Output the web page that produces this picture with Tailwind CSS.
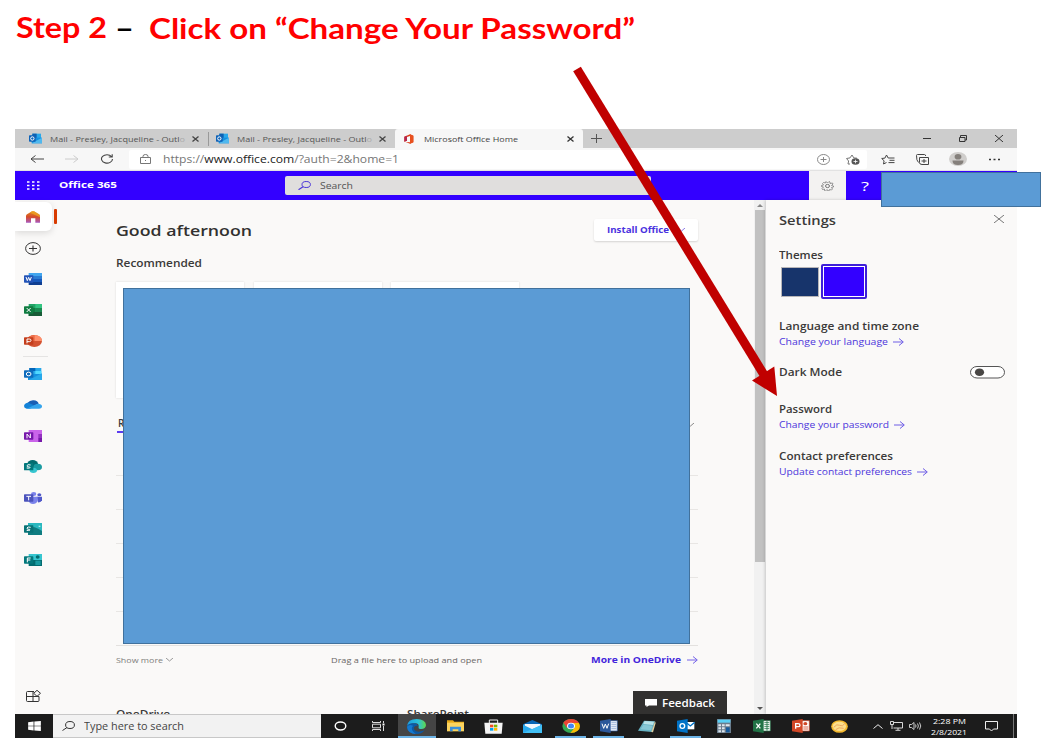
<!DOCTYPE html>
<html lang="en">
<head>
<meta charset="utf-8">
<title>Step 2 – Change Your Password</title>
<script src="https://cdn.jsdelivr.net/npm/@tailwindcss/browser@4"></script>
</head>
<body class="relative h-[747px] w-[1057px] overflow-hidden bg-white font-['Open_Sans','Noto_Sans',sans-serif] text-[#3b3a39]">

<h1 class="flex h-[129px] items-start pl-4 font-['Lato',sans-serif] text-[29px] leading-[36px] font-bold text-[#ff0000]">
  <span data-w="91" class="mt-[9px] inline-block shrink-0 origin-left whitespace-nowrap">Step 2</span>
  <span data-w="19" class="mt-[9px] ml-2 inline-block shrink-0 origin-left text-black">–</span>
  <span class="mt-[10px] ml-[15px] block h-[34px] overflow-hidden"><span data-w="486" class="inline-block origin-left whitespace-nowrap">Click on “Change Your Password”</span></span>
</h1>

<main class="ml-[15px] flex h-[609px] w-[1002px] flex-col overflow-hidden bg-[#faf9f8]">

  <!-- Tab strip -->
  <div class="flex h-[19px] shrink-0 items-center bg-[#cdcdcd] text-[8px] leading-[12px] text-[#555]">
    <svg class="ml-[14px] h-[11px] w-[13px] shrink-0" viewBox="0 0 39 33"><path d="M10 2h26v14H10z" fill="#28a8ea"/><path d="M10 2h13v14H10z" fill="#0f5fb0"/><path d="M8 14h31v17H8z" fill="#1490df"/><path d="M8 31L39 14v17z" fill="#50b8ee"/><rect y="7" width="20" height="19" rx="2" fill="#0f63b8"/><ellipse cx="10" cy="16.500" rx="5" ry="5" fill="none" stroke="#fff" stroke-width="3"/></svg>
    <span class="ml-2 flex w-[137px] shrink-0"><span data-w="135" class="inline-block shrink-0 origin-left whitespace-nowrap">Mail - Presley, Jacqueline - Outl<span class="text-[#aaa]">o</span></span></span>
    <svg class="ml-[5px] h-[6px] w-[7px] shrink-0" viewBox="0 0 7 6"><path d="M.5.5l6 5m0-5l-6 5" stroke="#444" stroke-width="1.300"/></svg>
    <i class="ml-[9px] h-[14px] w-px bg-[#999]"></i>
    <svg class="ml-[7px] h-[11px] w-[13px] shrink-0" viewBox="0 0 39 33"><path d="M10 2h26v14H10z" fill="#28a8ea"/><path d="M10 2h13v14H10z" fill="#0f5fb0"/><path d="M8 14h31v17H8z" fill="#1490df"/><path d="M8 31L39 14v17z" fill="#50b8ee"/><rect y="7" width="20" height="19" rx="2" fill="#0f63b8"/><ellipse cx="10" cy="16.500" rx="5" ry="5" fill="none" stroke="#fff" stroke-width="3"/></svg>
    <span class="ml-2 flex w-[137px] shrink-0"><span data-w="135" class="inline-block shrink-0 origin-left whitespace-nowrap">Mail - Presley, Jacqueline - Outl<span class="text-[#aaa]">o</span></span></span>
    <svg class="ml-[5px] h-[6px] w-[7px] shrink-0" viewBox="0 0 7 6"><path d="M.5.5l6 5m0-5l-6 5" stroke="#444" stroke-width="1.300"/></svg>
    <div class="ml-[9px] flex h-full w-[188px] shrink-0 items-center rounded-t-[3px] bg-[#f7f7f7] text-[#444]">
      <svg class="ml-[9px] h-[10px] w-[10px]" viewBox="0 0 30 30"><path d="M1 8L18 1l10 4v20l-10 4L5 24l13 1V6L9 9v11l-8 3z" fill="#dc3e15"/><path d="M18 1l10 4v20l-10 4z" fill="#e8501e"/><path d="M1 8l8-3v15l-8 3z" fill="#b5264c"/></svg>
      <span data-w="94" class="ml-[10px] inline-block shrink-0 origin-left whitespace-nowrap">Microsoft Office Home</span>
      <svg class="ml-[49px] h-[6px] w-[7px] shrink-0" viewBox="0 0 7 6"><path d="M.5.5l6 5m0-5l-6 5" stroke="#333" stroke-width="1.300"/></svg>
    </div>
    <svg class="ml-[8px] h-[9px] w-[11px]" viewBox="0 0 11 9"><path d="M0 4.500h11M5.500 0v9" stroke="#555"/></svg>
    <svg class="ml-[321px] h-[9px] w-[8px]" viewBox="0 0 8 9"><path d="M0 4.500h8" stroke="#333"/></svg>
    <svg class="ml-[28px] h-[7px] w-[8px]" viewBox="0 0 8 7"><path d="M.5 2.500h5.500v4H.5zM1.500 2.500V.5h6v4.500H6" fill="none" stroke="#333"/></svg>
    <svg class="ml-[28px] h-[7px] w-[8px]" viewBox="0 0 8 7"><path d="M0 0l8 7m0-7L0 7" stroke="#333"/></svg>
  </div>

  <!-- Address bar -->
  <div class="flex h-[23px] shrink-0 items-center border-b border-[#e2e2e2] bg-[#f7f7f7]">
    <svg class="ml-[15px] h-[8px] w-[14px]" viewBox="0 0 14 8"><path d="M14 4H1M5.500.5L1 4l4.500 3.500" fill="none" stroke="#444"/></svg>
    <svg class="ml-[21px] h-[8px] w-[14px]" viewBox="0 0 14 8"><path d="M0 4h13M8.500.5L13 4 8.500 7.500" fill="none" stroke="#ccc"/></svg>
    <svg class="ml-[21px] h-[10px] w-[14px]" viewBox="0 0 14 10"><path d="M11.500 2.500A5.500 4.200 0 1 0 12.500 5M12.200.3v2.700H8.800" fill="none" stroke="#444" stroke-width="1.100"/></svg>
    <div class="ml-[15px] flex h-[19px] w-[738px] items-center rounded-[2px] bg-white">
      <svg class="ml-[11px] h-[10px] w-[11px]" viewBox="0 0 11 10"><path d="M.5 3.500h10v6H.5zM3 3.500V2.300Q3 .5 5.500.5T8 2.300v1.200" fill="none" stroke="#777"/><path d="M5 6h1v1H5z" fill="#777"/></svg>
      <span data-w="236" class="ml-[12px] inline-block shrink-0 origin-left text-[10.500px] leading-[16px] whitespace-nowrap text-[#767676]">https://<span class="text-[#222]">www.office.com</span>/?auth=2&amp;home=1</span>
      <svg class="ml-[418px] h-[11px] w-[13px]" viewBox="0 0 13 11"><ellipse cx="6.500" cy="5.500" rx="6" ry="5" fill="none" stroke="#888"/><path d="M3.500 5.500h6M6.500 3v5" stroke="#888"/></svg>
      <svg class="ml-[16px] h-[11px] w-[14px]" viewBox="0 0 14 11"><path d="M4 10l-2 0 .6-3L.5 4.500l3.500-.6L6 1l1.800 2.900L11 4.200" fill="none" stroke="#777"/><ellipse cx="9.500" cy="7.500" rx="4" ry="3.200" fill="#555"/><path d="M7.500 7.500h4M9.500 5.700v3.600" stroke="#fff" stroke-width=".8"/></svg>
    </div>
    <svg class="ml-[14px] h-[11px] w-[14px]" viewBox="0 0 14 11"><path d="M5.500 8.500L2.500 10l.6-3.200L.7 4.500l3.200-.4L5.500 1l1.700 3h6.300M8.500 6.300h5M7.500 8.600h6" fill="none" stroke="#444"/></svg>
    <svg class="ml-[21px] h-[11px] w-[13px]" viewBox="0 0 13 11"><path d="M3.500 3.500h9v7H6q-2.500 0-2.500-2zM2.500 8.500Q.3 6.500.5 1.500q0-1 1-1h7q1 0 1.200 1.500M5.500 7h5M8 5v4" fill="none" stroke="#444"/></svg>
    <svg class="ml-[20px] h-[14px] w-[18px]" viewBox="0 0 18 14"><ellipse cx="9" cy="7" rx="9" ry="7" fill="#d0cecc"/><ellipse cx="9" cy="4.800" rx="3.400" ry="2.800" fill="#85807c"/><path d="M3.500 8.500h11q0 4.500-5.500 4.500T3.500 8.500z" fill="#85807c"/></svg>
    <svg class="ml-[22px] h-[3px] w-[11px]" viewBox="0 0 11 3"><path d="M0 1.500h2M4.500 1.500h2M9 1.500h2" stroke="#333" stroke-width="1.500"/></svg>
  </div>

  <!-- Office header -->
  <div class="flex h-[29px] shrink-0 items-center bg-[#3300ff] text-white">
    <svg class="ml-[12px] h-[9px] w-[13px]" viewBox="0 0 13 9"><path d="M0 1h2.500M5 1h2.500M10 1h2.500M0 4.500h2.500M5 4.500h2.500M10 4.500h2.500M0 8h2.500M5 8h2.500M10 8h2.500" stroke="#fff" stroke-width="1.700"/></svg>
    <span data-w="58" class="ml-[19px] inline-block shrink-0 origin-left text-[9.500px] font-bold whitespace-nowrap">Office 365</span>
    <div class="ml-[168px] flex h-[19px] w-[366px] shrink-0 items-center rounded-[2px] bg-[#e0dedd] text-[#555]">
      <svg class="ml-[13px] h-[9px] w-[13px]" viewBox="0 0 13 9"><ellipse cx="8.200" cy="3.500" rx="4.200" ry="3" fill="none" stroke="#4a35d8"/><path d="M5 5.700L.5 8.700" stroke="#4a35d8" stroke-width="1.200"/></svg>
      <span data-w="33" class="ml-[9px] inline-block shrink-0 origin-left text-[9px]">Search</span>
    </div>
    <div class="ml-[158px] flex h-full w-[37px] shrink-0 items-center justify-center bg-[#f3f2f1]">
      <svg class="h-[10px] w-[13px]" viewBox="0 0 26 20"><path d="M10 1l3 3 3-3 2 1 0 3 5-1 1 2-3 3 4 1v2l-4 1 2 3-2 2-4-1-1 3h-2l-2-3-3 3-2-1 0-3-4 1-1-2 3-3-4-1V9l4-1-2-3 2-2 4 1z" fill="none" stroke="#777" stroke-width="1.500"/><ellipse cx="13" cy="10" rx="4" ry="3.200" fill="none" stroke="#777" stroke-width="2"/></svg>
    </div>
    <span data-w="8" class="ml-[15px] inline-block shrink-0 origin-left text-[13px] leading-[18px]">?</span>
  </div>

  <div class="flex min-h-0 flex-1">
    <!-- App rail -->
    <nav class="flex w-[60px] shrink-0 flex-col">
      <div class="mt-[2px] flex h-[31px] items-start">
        <div class="flex h-[29px] w-[37px] items-center rounded-r-[6px] bg-white pl-[11px] shadow-[0_2px_7px_rgba(0,0,0,.13)]">
          <svg class="h-[12px] w-[14px]" viewBox="0 0 42 36"><defs><linearGradient id="hm" x2="0" y2="1"><stop stop-color="#e08a20"/><stop offset=".5" stop-color="#d54a28"/><stop offset="1" stop-color="#a85ac0"/></linearGradient></defs><path d="M0 15Q0 12 3 10L18 1q3-1 6 0l15 9q3 2 3 5v20H28V22H15v13H0z" fill="url(#hm)"/><path d="M12 5L18 1q3-1 6 0l15 9q3 2 3 5v4z" fill="#f0a81c" opacity=".7"/></svg>
        </div>
        <i class="mt-[7px] ml-[2px] h-[15px] w-[3px] rounded-[1px] bg-[#d83b01]"></i>
      </div>
      <div class="flex h-[31px] items-center pl-[10px]"><svg class="h-[13px] w-[16px]" viewBox="0 0 16 13"><ellipse cx="8" cy="6.500" rx="7.400" ry="5.900" fill="none" stroke="#333"/><path d="M4 6.500h8M8 3.500v6" stroke="#333" stroke-width="1.100"/></svg></div>
      <div class="flex h-[30px] items-center pl-[9px]"><svg class="h-[12px] w-[18px]" viewBox="0 0 54 36"><path d="M14 0h40v9H14z" fill="#41a5ee"/><path d="M14 9h40v9H14z" fill="#2b7cd3"/><path d="M14 18h40v9H14z" fill="#185abd"/><path d="M14 27h40v9H14z" fill="#103f91"/><rect y="7" width="28" height="22" rx="2" fill="#2455b8"/><path d="M6 12l4 11 4-10 4 10 4-11" fill="none" stroke="#fff" stroke-width="3"/></svg></div>
      <div class="flex h-[31px] items-center pl-[9px]"><svg class="h-[12px] w-[18px]" viewBox="0 0 54 36"><path d="M14 0h40v36H14z" fill="#21a366"/><path d="M34 0h20v12H34z" fill="#33c481"/><path d="M14 12h20v12H14z" fill="#107c41"/><path d="M14 24h40v12H14z" fill="#185c37"/><path d="M34 12h20v12H34z" fill="#1a8a50"/><rect y="7" width="28" height="22" rx="2" fill="#107c41"/><path d="M8 12l12 12M20 12L8 24" stroke="#fff" stroke-width="3"/></svg></div>
      <div class="flex h-[31px] items-center pl-[9px]"><svg class="h-[12px] w-[18px]" viewBox="0 0 54 36"><ellipse cx="31" cy="18" rx="23" ry="18" fill="#d35230"/><path d="M31 0q23 1 23 18H31z" fill="#ff8f6b"/><path d="M31 0Q10 1 8 18h23z" fill="#ed6c47"/><rect y="7" width="28" height="22" rx="2" fill="#c43e1c"/><path d="M9 25V12h7q5 0 5 4t-5 4H9" fill="none" stroke="#fff" stroke-width="3"/></svg></div>
      <i class="ml-[8px] h-px w-[25px] bg-[#e5e4e3]"></i>
      <div class="mt-[1px] flex h-[31px] items-center pl-[9px]"><svg class="h-[12px] w-[18px]" viewBox="0 0 54 36"><path d="M16 0h36v18H16z" fill="#28a8ea"/><path d="M16 0h18v9H16z" fill="#0364b8"/><path d="M34 9h18v10H34z" fill="#50d9ff"/><path d="M12 18h42v18H12z" fill="#1490df"/><path d="M14 36l40-20v20z" fill="#28a8ea"/><rect y="7" width="28" height="22" rx="2" fill="#0f6cbd"/><ellipse cx="14" cy="18" rx="7" ry="5.500" fill="none" stroke="#fff" stroke-width="3"/></svg></div>
      <div class="flex h-[31px] items-center pl-[9px]"><svg class="h-[9px] w-[18px]" viewBox="0 0 54 27"><path d="M10 9Q18 0 29 1q12 1 15 10L24 20z" fill="#1a5fb4"/><path d="M8 26Q0 25 0 18q1-9 13-10l22 10-17 8z" fill="#1483d8"/><path d="M8 26L40 11q14 0 14 8 0 7-9 7z" fill="#35a4ec"/></svg></div>
      <div class="flex h-[31px] items-center pl-[9px]"><svg class="h-[12px] w-[18px]" viewBox="0 0 54 36"><path d="M14 0h40v36H14z" fill="#ca64ea"/><path d="M43 12h11v12H43z" fill="#9332bf"/><path d="M43 24h11v12H43z" fill="#7719aa"/><rect y="7" width="28" height="22" rx="2" fill="#7719aa"/><path d="M9 25V12l10 12V11" fill="none" stroke="#fff" stroke-width="3"/></svg></div>
      <div class="flex h-[31px] items-center pl-[9px]"><svg class="h-[13px] w-[18px]" viewBox="0 0 54 39"><ellipse cx="26" cy="12" rx="16" ry="12" fill="#036c70"/><ellipse cx="41" cy="21" rx="13" ry="10" fill="#1a9ba1"/><ellipse cx="28" cy="31" rx="11" ry="8" fill="#37c6d0"/><rect y="9" width="28" height="22" rx="2" fill="#03787c"/><path d="M20 15q-10-3-11 2t8 4q4 5-9 3" fill="none" stroke="#fff" stroke-width="3"/></svg></div>
      <div class="flex h-[31px] items-center pl-[9px]"><svg class="h-[12px] w-[18px]" viewBox="0 0 54 36"><ellipse cx="29" cy="6" rx="8" ry="6" fill="#7b83eb"/><ellipse cx="46" cy="8" rx="6" ry="4.500" fill="#5059c9"/><path d="M38 14h16v11q-3 7-12 6z" fill="#5059c9"/><path d="M14 14h27v13q-4 9-14 9T14 27z" fill="#7b83eb"/><rect y="7" width="28" height="22" rx="2" fill="#4b53bc"/><path d="M7 13h14M14 13v12" stroke="#fff" stroke-width="3"/></svg></div>
      <div class="flex h-[31px] items-center pl-[9px]"><svg class="h-[12px] w-[18px]" viewBox="0 0 54 36"><path d="M12 0h42v36H12z" fill="#2ab8bf"/><path d="M12 16q10-6 20-3t22 11v12H12z" fill="#0f7c80"/><path d="M44 8h5v4h-5z" fill="#b0f0f0"/><rect y="7" width="28" height="22" rx="2" fill="#087377"/><path d="M20 13q-10-3-11 2t8 4q4 5-9 3" fill="none" stroke="#fff" stroke-width="3"/></svg></div>
      <div class="flex h-[31px] items-center pl-[9px]"><svg class="h-[12px] w-[18px]" viewBox="0 0 54 36"><path d="M14 0h40v18H14z" fill="#37c6d0"/><path d="M14 18h40v18H14z" fill="#036c70"/><ellipse cx="41" cy="9" rx="6" ry="5" fill="#036c70"/><path d="M34 20h16v13H34z" fill="#1a9ba1"/><rect y="7" width="28" height="22" rx="2" fill="#03787c"/><path d="M10 25V12h10M10 18h9" fill="none" stroke="#fff" stroke-width="3"/></svg></div>
      <svg class="mt-auto mb-[12px] ml-[11px] h-[12px] w-[15px]" viewBox="0 0 15 12"><path d="M8 1.500H1.500q-1 0-1 1V10.500q0 1 1 1h10.500q1 0 1-1V6.500H.5M7 1.500v10" fill="none" stroke="#333"/><path d="M11 .3l3.500 3L11 6.300l-3.300-3z" fill="#faf9f8" stroke="#333"/></svg>
    </nav>

    <!-- Home content -->
    <section class="flex w-[679px] shrink-0 flex-col overflow-hidden pl-[41px]">
      <div class="mt-[19px] flex h-[22px] w-[582px] items-center justify-between">
        <span data-w="136" class="inline-block shrink-0 origin-left text-[14px] font-semibold whitespace-nowrap text-[#323130]">Good afternoon</span>
        <div class="flex h-[22px] w-[104px] shrink-0 items-center rounded-[2px] bg-white pl-[13px] text-[#4a32e0] shadow-[0_1px_2px_rgba(0,0,0,.15)]">
          <span data-w="62" class="inline-block shrink-0 origin-left text-[9px] font-bold whitespace-nowrap">Install Office</span>
          <svg class="ml-[9px] h-[4px] w-[7px]" viewBox="0 0 7 4"><path d="M0 0l3.500 3L7 0" fill="none" stroke="#8a7ae8"/></svg>
        </div>
      </div>
      <span data-w="86" class="mt-[14px] inline-block origin-left self-start text-[10px] leading-[16px] font-semibold">Recommended</span>
      <div class="mt-[11px] flex gap-[9.500px]">
        <div class="h-[116px] w-[128px] bg-white shadow-[0_0_2px_rgba(0,0,0,.13)]"></div>
        <div class="h-[116px] w-[128px] bg-white shadow-[0_0_2px_rgba(0,0,0,.13)]"></div>
        <div class="h-[116px] w-[128px] bg-white shadow-[0_0_2px_rgba(0,0,0,.13)]"></div>
      </div>
      <div class="mt-[18px] flex h-[17px] w-[578px] items-center justify-between pl-[1px]">
        <span class="h-[17px] w-[44px] border-b-2 border-[#5b3df0] pl-[1px] text-[10px] leading-[15px] font-semibold">Recent</span>
        <svg class="h-[4px] w-[7px]" viewBox="0 0 7 4"><path d="M0 0l3.500 3L7 0" fill="none" stroke="#888"/></svg>
      </div>
      <div class="mt-[42px] flex w-[582px] flex-col gap-[33px]">
        <i class="h-px bg-[#e8e6e4]"></i><i class="h-px bg-[#e8e6e4]"></i><i class="h-px bg-[#e8e6e4]"></i><i class="h-px bg-[#e8e6e4]"></i><i class="h-px bg-[#e8e6e4]"></i><i class="h-px bg-[#e3e1df]"></i>
      </div>
      <div class="mt-[8px] flex h-[12px] w-[582px] items-center text-[8px] text-[#6a6866]">
        <span data-w="47" class="inline-block shrink-0 origin-left whitespace-nowrap text-[#807e7c]">Show more</span>
        <svg class="ml-[3px] h-[4px] w-[7px] shrink-0" viewBox="0 0 7 4"><path d="M0 0l3.500 3L7 0" fill="none" stroke="#999"/></svg>
        <span data-w="151" class="ml-[158px] inline-block shrink-0 origin-left whitespace-nowrap">Drag a file here to upload and open</span>
        <span data-w="90" class="ml-[109px] inline-block shrink-0 origin-left text-[9px] font-bold whitespace-nowrap text-[#4326dc]">More in OneDrive</span>
        <svg class="ml-[6px] h-[8px] w-[11px] shrink-0" viewBox="0 0 11 8"><path d="M0 4h10M6 .5L10.300 4 6 7.500" fill="none" stroke="#7563e8"/></svg>
      </div>
      <div class="mt-[25px] flex w-[611px] items-start">
        <div class="mt-[15px] flex h-[14px] w-[517px] shrink-0 text-[11px] leading-[16px] font-semibold">
          <span data-w="54" class="inline-block shrink-0 origin-left">OneDrive</span>
          <span data-w="62" class="ml-[237px] inline-block shrink-0 origin-left">SharePoint</span>
        </div>
        <div class="flex h-[24px] w-[94px] shrink-0 items-center bg-[#323130] pl-[12px] text-white">
          <svg class="h-[8px] w-[12px] shrink-0" viewBox="0 0 12 8"><path d="M0 0h12v6.500H4L1.500 8V6.500H0z" fill="#fff"/></svg>
          <span data-w="53" class="ml-[5px] inline-block shrink-0 origin-left text-[11px] font-semibold">Feedback</span>
        </div>
      </div>
    </section>

    <!-- Scrollbar -->
    <div class="flex w-[12px] shrink-0 flex-col items-center bg-[#f1f1f1]">
      <svg class="mt-[4px] h-[3px] w-[6px]" viewBox="0 0 6 3"><path d="M0 3l3-3 3 3z" fill="#888"/></svg>
      <i class="mt-[3px] h-[352px] w-[10px] bg-[#c1c1c1]"></i>
      <svg class="mt-auto mb-[4px] h-[3px] w-[6px]" viewBox="0 0 6 3"><path d="M0 0h6L3 3z" fill="#555"/></svg>
    </div>

    <!-- Settings panel -->
    <aside class="flex w-[251px] shrink-0 flex-col items-start bg-[#faf9f8] pl-[13px] text-[10px] leading-[14px] font-semibold shadow-[-1px_0_3px_rgba(0,0,0,.18)]">
      <div class="mt-[12px] flex h-[18px] w-[225px] items-center justify-between">
        <span data-w="57" class="inline-block shrink-0 origin-left text-[12.500px] leading-[18px]">Settings</span>
        <svg class="mb-[5px] h-[8px] w-[10px]" viewBox="0 0 10 8"><path d="M0 0l10 8m0-8L0 8" stroke="#666" stroke-width=".9"/></svg>
      </div>
      <span data-w="44" class="mt-[18px] inline-block origin-left">Themes</span>
      <div class="mt-[2px] ml-[2px] flex items-center">
        <i class="h-[30px] w-[38px] border border-[#b8b6b8] bg-[#17346b]"></i>
        <i class="ml-[2px] h-[35px] w-[46px] rounded-[2px] border-2 border-[#3d1ed8] bg-white p-px"><b class="block h-full bg-[#3300ff]"></b></i>
      </div>
      <span data-w="140" class="mt-[20px] inline-block origin-left whitespace-nowrap">Language and time zone</span>
      <div class="mt-[2px] flex items-center text-[8.500px] font-normal text-[#4d37dc]"><span data-w="109" class="inline-block shrink-0 origin-left whitespace-nowrap">Change your language</span><svg class="ml-[5px] h-[8px] w-[11px]" viewBox="0 0 11 8"><path d="M0 4h10M6 .5L10.300 4 6 7.500" fill="none" stroke="#6f5ee6"/></svg></div>
      <div class="mt-[16px] flex w-[226px] items-center justify-between">
        <span data-w="63" class="inline-block shrink-0 origin-left whitespace-nowrap">Dark Mode</span>
        <svg class="h-[13px] w-[35px]" viewBox="0 0 35 13"><rect x=".5" y=".5" width="34" height="11.500" rx="6.500" ry="5.700" fill="#fff" stroke="#555"/><ellipse cx="9.500" cy="6.200" rx="4.600" ry="3.800" fill="#484644"/></svg>
      </div>
      <span data-w="53" class="mt-[23px] inline-block origin-left">Password</span>
      <div class="mt-[2px] flex items-center text-[8.500px] font-normal text-[#4d37dc]"><span data-w="110" class="inline-block shrink-0 origin-left whitespace-nowrap">Change your password</span><svg class="ml-[5px] h-[8px] w-[11px]" viewBox="0 0 11 8"><path d="M0 4h10M6 .5L10.300 4 6 7.500" fill="none" stroke="#6f5ee6"/></svg></div>
      <span data-w="114" class="mt-[17px] inline-block origin-left whitespace-nowrap">Contact preferences</span>
      <div class="mt-[2px] flex items-center text-[8.500px] font-normal text-[#4d37dc]"><span data-w="133" class="inline-block shrink-0 origin-left whitespace-nowrap">Update contact preferences</span><svg class="ml-[5px] h-[8px] w-[11px]" viewBox="0 0 11 8"><path d="M0 4h10M6 .5L10.300 4 6 7.500" fill="none" stroke="#6f5ee6"/></svg></div>
    </aside>
  </div>

  <!-- Taskbar -->
  <footer class="z-10 flex h-[24px] shrink-0 bg-[#1c1c1c]">
    <div class="flex w-[38px] shrink-0 items-center justify-center"><svg class="h-[10px] w-[13px]" viewBox="0 0 14 11"><path d="M0 1.300L6 .6v4.500H0zM6.800.5L14 0v5.100H6.800zM0 5.900h6v4.500L0 9.700zM6.800 5.900H14V11l-7.200-.6z" fill="#fff"/></svg></div>
    <div class="flex w-[268px] shrink-0 items-center border-y border-[#c8c8c8] bg-[#f2f2f2]">
      <svg class="ml-[9px] h-[10px] w-[13px]" viewBox="0 0 13 10"><ellipse cx="8" cy="4" rx="4.400" ry="3.500" fill="none" stroke="#333"/><path d="M5 6.500L.5 9.500" stroke="#333"/></svg>
      <span data-w="100" class="ml-[9px] inline-block shrink-0 origin-left text-[10px] whitespace-nowrap text-[#444]">Type here to search</span>
    </div>
    <div class="grid grid-cols-[repeat(14,38.4px)]">
      <div class="flex items-center justify-center"><svg class="h-[10px] w-[13px]" viewBox="0 0 13 10"><ellipse cx="6.500" cy="5" rx="5.300" ry="4" fill="none" stroke="#fff" stroke-width="1.400"/></svg></div>
      <div class="flex items-center justify-center"><svg class="h-[10px] w-[13px]" viewBox="0 0 13 10"><path d="M.5 0v1.500h8V0M.5 10V8.500h8V10M.5 3.200h8v3.600h-8zM11.500 0v2M11.500 5v5" fill="none" stroke="#ddd"/><path d="M10.500 2.500h2v2h-2z" fill="#fff"/></svg></div>
      <div class="flex items-center justify-center border-b-2 border-[#6cb3e6] bg-[#454545] pt-[2px]"><svg class="h-[15px] w-[19px]" viewBox="0 0 57 45"><defs><linearGradient id="eg"><stop stop-color="#1b9de2"/><stop offset=".6" stop-color="#2dc2d8"/><stop offset="1" stop-color="#5fd94a"/></linearGradient></defs><path d="M0 22Q2 0 29 0q27 1 28 18-1 12-14 12-10 0-8-6 2-10-10-11Q5 13 0 22z" fill="url(#eg)"/><path d="M0 22q5-10 20-9 10 0 13 7-15 0-12 11 5 10 22 6 6-1 10-4-8 12-24 12Q1 44 0 22z" fill="#0c59a4"/><path d="M18 20q-10 12 9 25Q1 43 0 23q7-8 18-3z" fill="#1479d0"/></svg></div>
      <div class="flex items-center justify-center"><svg class="h-[12px] w-[17px]" viewBox="0 0 51 36"><path d="M0 1h18l4 4h29v10H0z" fill="#e8a917"/><path d="M0 8h51v26H0z" fill="#fcd45f"/><path d="M9 34V20h33v14h-8v-6H17v6z" fill="#3a8fdb"/></svg></div>
      <div class="flex items-center justify-center"><svg class="h-[15px] w-[19px]" viewBox="0 0 57 45"><path d="M16 12V3h25v9" fill="none" stroke="#eee" stroke-width="3"/><path d="M1 11h55l-3 33H4z" fill="#f4f4f4"/><path d="M18 17h10v8H18z" fill="#f05022"/><path d="M30 17h10v8H30z" fill="#7db900"/><path d="M18 27h10v8H18z" fill="#00a3ee"/><path d="M30 27h10v8H30z" fill="#ffb800"/></svg></div>
      <div class="flex items-center justify-center"><svg class="h-[13px] w-[19px]" viewBox="0 0 57 39"><path d="M0 13L28 0l29 13v26H0z" fill="#0a67b5"/><path d="M5 12h47v10L28 31 5 22z" fill="#f3f8fc"/><path d="M0 14l28 14 29-14v25H0z" fill="#29a9ee"/><path d="M0 39l57-25v25z" fill="#42c0f5"/></svg></div>
      <div class="flex items-end justify-center"><div class="flex h-[24px] w-[31px] items-center justify-center border-b-2 border-[#6cb3e6] pt-[2px]"><svg class="h-[14px] w-[18px]" viewBox="0 0 54 42"><ellipse cx="27" cy="21" rx="26" ry="21" fill="#34a853"/><path d="M4 11Q12 0 27 0q17 0 24 12H27l-12 14z" fill="#ea4335"/><path d="M51 12q7 14-4 23-8 7-22 7l13-16-4-14z" fill="#fbbc05"/><ellipse cx="27" cy="21" rx="12" ry="10" fill="#fff"/><ellipse cx="27" cy="21" rx="9" ry="7.500" fill="#4285f4"/></svg></div></div>
      <div class="flex items-end justify-center"><div class="flex h-[24px] w-[31px] items-center justify-center border-b-2 border-[#6cb3e6] pt-[2px]"><svg class="h-[14px] w-[18px]" viewBox="0 0 54 42"><path d="M28 5h24v31H28z" fill="#eef3fb" stroke="#2b579a" stroke-width="2"/><path d="M34 11h15M34 17h15M34 23h15M34 29h15" stroke="#8fa9d3" stroke-width="2.500"/><path d="M0 5l32-5v42L0 37z" fill="#2b579a"/><path d="M6 14l5 14 5-13 5 13 5-14" fill="none" stroke="#fff" stroke-width="3"/></svg></div></div>
      <div class="flex items-center justify-center"><svg class="h-[13px] w-[18px]" viewBox="0 0 54 39"><path d="M18 2l33 2-9 32-42-4z" fill="#68b3c4"/><path d="M20 3l28 2-3 10-29-3z" fill="#b8e2e8"/><path d="M51 4l2 5-8 28-5-1z" fill="#dfcfa0"/><path d="M16 14l27 3-4 14-31-3z" fill="#86c8d6"/></svg></div>
      <div class="flex items-end justify-center"><div class="flex h-[24px] w-[31px] items-center justify-center border-b-2 border-[#6cb3e6] pt-[2px]"><svg class="h-[14px] w-[18px]" viewBox="0 0 54 42"><path d="M28 9h24v22H28z" fill="#fff"/><path d="M30 13l10 8 13-11" fill="none" stroke="#0072c6" stroke-width="4"/><path d="M0 5l32-5v42L0 37z" fill="#0072c6"/><ellipse cx="16" cy="21" rx="7" ry="7" fill="none" stroke="#fff" stroke-width="4"/></svg></div></div>
      <div class="flex items-center justify-center"><svg class="h-[14px] w-[14px]" viewBox="0 0 42 42"><path d="M0 0h42v42H0z" fill="#6b7d8d"/><path d="M2 2h38v9H2z" fill="#59d0f5"/><path d="M4 16h8v6H4zM15 16h8v6h-8zM4 25h8v6H4zM15 25h8v6h-8zM4 34h8v6H4zM15 34h8v6h-8zM26 16h12v6H26z" fill="#dfe7ee"/><path d="M27 25h11v15H27z" fill="#165a9c"/></svg></div>
      <div class="flex items-center justify-center"><svg class="h-[14px] w-[18px]" viewBox="0 0 54 42"><path d="M28 5h24v31H28z" fill="#fff" stroke="#217346" stroke-width="2"/><path d="M34 11h15M34 17h15M34 23h15M34 29h15M42 6v29" stroke="#217346" stroke-width="2.500"/><path d="M0 5l32-5v42L0 37z" fill="#217346"/><path d="M10 14l12 14M22 14L10 28" stroke="#fff" stroke-width="4"/></svg></div>
      <div class="flex items-center justify-center"><svg class="h-[14px] w-[18px]" viewBox="0 0 54 42"><path d="M28 5h24v31H28z" fill="#fff" stroke="#d24726" stroke-width="2"/><path d="M34 24h15M34 30h15" stroke="#d24726" stroke-width="2.500"/><ellipse cx="40" cy="14" rx="6" ry="5" fill="#d24726"/><path d="M0 5l32-5v42L0 37z" fill="#d24726"/><path d="M11 29V14h7q6 0 6 4.500T18 23h-7" fill="none" stroke="#fff" stroke-width="4"/></svg></div>
      <div class="flex items-center justify-center"><svg class="h-[13px] w-[17px]" viewBox="0 0 51 39"><ellipse cx="25.500" cy="19.500" rx="25" ry="19" fill="#f5b92e"/><ellipse cx="25" cy="19" rx="20" ry="14" fill="#fbdf8d"/><path d="M8 22q10-12 18-6t16-6M14 29q9-9 24-4" fill="none" stroke="#f0a860" stroke-width="3"/></svg></div>
    </div>
    <div class="flex flex-1 items-center text-white">
      <svg class="ml-[15px] h-[5px] w-[10px]" viewBox="0 0 10 5"><path d="M.5 4.500L5 .7l4.500 3.800" fill="none" stroke="#eee"/></svg>
      <svg class="ml-[7px] h-[10px] w-[13px]" viewBox="0 0 13 10"><path d="M4 1.500h8.500v5.500H3.500M.5.500h3v3h-3zM2 3.500v4.500M5.500 9.300h5M8 7v2" fill="none" stroke="#eee" stroke-width=".9"/></svg>
      <svg class="ml-[6px] h-[8px] w-[13px]" viewBox="0 0 13 8"><path d="M.5 2.500H2.500L5 .5v7L2.500 5.500H.5zM6.500 2.500q1 1.500 0 3M8.500 1.500q1.800 2.500 0 5M10.500.5q2.500 3.500 0 7" fill="none" stroke="#ddd" stroke-width=".9"/></svg>
      <div class="ml-[9px] flex w-[37px] flex-col items-start text-[8px] leading-[11px]"><span data-w="33" class="ml-[2px] inline-block origin-left whitespace-nowrap">2:28 PM</span><span data-w="36" class="inline-block origin-left whitespace-nowrap">2/8/2021</span></div>
      <svg class="ml-[17px] h-[11px] w-[13px]" viewBox="0 0 13 11"><path d="M.5.5h12v7.500H8.500L6.500 10 4.500 8H.5z" fill="none" stroke="#eee"/></svg>
      <i class="mr-[3px] ml-auto h-full w-px bg-[#777]"></i>
    </div>
  </footer>
</main>

<!-- Redaction boxes and pointer arrow drawn over the screen -->
<div class="absolute top-[288px] left-[123px] h-[356px] w-[567px] border border-[#41719c] bg-[#5b9bd5]"></div>
<div class="absolute top-[172px] left-[881px] h-[35px] w-[160px] border border-[#41719c] bg-[#5b9bd5]"></div>
<svg class="absolute top-0 left-0 h-[747px] w-[1057px]" viewBox="0 0 1057 747"><path d="M577 69L765 376.500" stroke="#c00000" stroke-width="9"/><path d="M777 396l-2.700-29.500L752 380.500z" fill="#c00000"/></svg>

<script>
  // Stretch each label horizontally to its data-w width, again whenever its natural size changes.
  const fit = el => {
    el.style.transform = 'none';
    const natural = el.getBoundingClientRect().width, target = +el.dataset.w;
    if (!natural) return;
    el.style.marginRight = (target - natural) + 'px';
    el.style.transform = 'scaleX(' + target / natural + ')';
  };
  const labels = [...document.querySelectorAll('[data-w]')];
  const fitAll = () => labels.forEach(fit);
  const observer = new ResizeObserver(fitAll);
  labels.forEach(el => observer.observe(el));
  fitAll();
  addEventListener('load', fitAll);
  document.fonts.ready.then(fitAll);
</script>
</body>
</html>
